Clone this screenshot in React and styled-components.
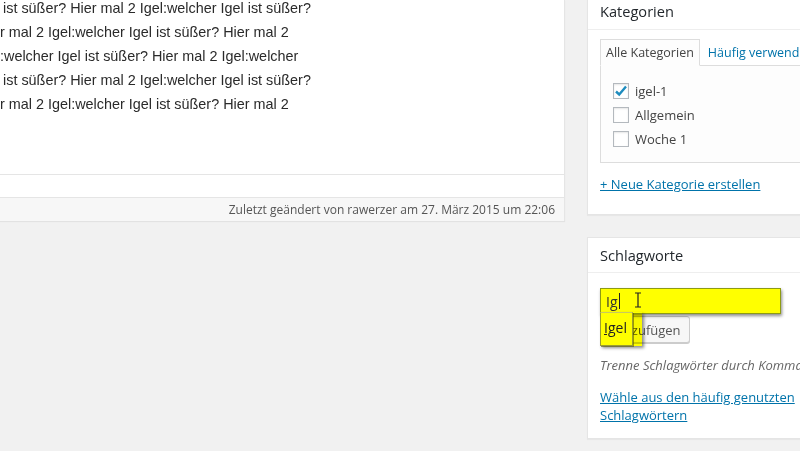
import React from 'react';
import styled, { createGlobalStyle } from 'styled-components';

const Global = createGlobalStyle`
  html, body {
    margin: 0;
    padding: 0;
    background: #f1f1f1;
    overflow: hidden;
  }
  body {
    font-family: "Open Sans", "Noto Sans", sans-serif;
    font-size: 13px;
    color: #444;
  }
`;

const Page = styled.div`
  display: flex;
  align-items: flex-start;
  width: 800px;
  height: 451px;
  overflow: hidden;
`;

const EditorPanel = styled.div`
  width: 565px;
  flex-shrink: 0;
  background: #fff;
  box-shadow: 0 1px 1px rgba(0, 0, 0, 0.06);
  border-right: 1px solid #e5e5e5;
  box-sizing: border-box;
`;

const EditorBody = styled.div`
  height: 174px;
  overflow: hidden;
  border-bottom: 1px solid #e5e5e5;
`;

const EditorText = styled.div`
  margin-top: -4px;
  font-family: "Liberation Sans", Arial, sans-serif;
  font-size: 14.4px;
  line-height: 24px;
  color: #2a2a2a;
  white-space: nowrap;
`;

const Line = styled.div`
  padding-left: ${p => p.$indent || 0}px;
`;

const Spacer = styled.div`
  height: 22px;
`;

const StatusBar = styled.div`
  height: 23px;
  background: #f7f7f7;
  border-top: 1px solid #e5e5e5;
  display: flex;
  align-items: center;
  justify-content: flex-end;
  padding-right: 9px;
  font-size: 12px;
  color: #555;
`;

const Sidebar = styled.div`
  margin-left: 22px;
  width: 280px;
  flex-shrink: 0;
  display: flex;
  flex-direction: column;
  gap: 22px;
`;

const Box = styled.div`
  background: #fff;
  border: 1px solid #e5e5e5;
  box-shadow: 0 1px 1px rgba(0, 0, 0, 0.04);
  margin-top: ${p => p.$top || 0}px;
`;

const BoxHeader = styled.div`
  height: ${p => p.$h}px;
  box-sizing: border-box;
  border-bottom: 1px solid #eee;
  display: flex;
  align-items: flex-end;
  padding: 0 12px ${p => p.$pb}px;
  font-size: 14.6px;
  color: #23282d;
`;

const BoxInside = styled.div`
  padding: ${p => p.$pad};
`;

const Tabs = styled.div`
  display: flex;
  align-items: flex-end;
  position: relative;
  z-index: 1;
  margin-bottom: -1px;
`;

const Tab = styled.div`
  height: 27px;
  box-sizing: border-box;
  padding: 0 5px;
  display: flex;
  align-items: center;
  font-size: 12.5px;
  border: 1px solid ${p => (p.$active ? '#ddd' : 'transparent')};
  border-bottom-color: ${p => (p.$active ? '#fdfdfd' : 'transparent')};
  background: ${p => (p.$active ? '#fdfdfd' : 'transparent')};
  color: ${p => (p.$active ? '#444' : '#0073aa')};
  white-space: nowrap;
  margin-left: ${p => (p.$active ? 0 : 2)}px;
`;

const TabPanel = styled.div`
  border: 1px solid #ddd;
  background: #fdfdfd;
  padding: 13px 12px 11px;
  width: 300px;
`;

const CheckRow = styled.label`
  display: flex;
  align-items: center;
  height: 24px;
  gap: 6px;
  color: #444;
`;

const CheckBox = styled.span`
  width: 16px;
  height: 16px;
  box-sizing: border-box;
  border: 1px solid #b4b9be;
  background: #fff;
  box-shadow: inset 0 1px 2px rgba(0, 0, 0, 0.1);
  display: flex;
  align-items: center;
  justify-content: center;
`;

const Link = styled.a`
  color: #0073aa;
  text-decoration: underline;
  display: block;
  line-height: 18px;
  margin-top: ${p => p.$mt || 0}px;
`;

const TagForm = styled.div`
  position: relative;
  height: 57px;
`;

const TagInput = styled.div`
  width: 181px;
  height: 26px;
  box-sizing: border-box;
  background: #ffff00;
  border: 1px solid #8d9a14;
  box-shadow: 1px 2px 3px rgba(0, 0, 0, 0.45);
  display: flex;
  align-items: center;
  padding-left: 5px;
  font-size: 14px;
  color: #333;
  position: relative;
  z-index: 2;
`;

const Caret = styled.span`
  display: inline-block;
  width: 1px;
  height: 16px;
  background: #222;
  margin-left: 1px;
`;

const IBeam = styled.svg`
  position: absolute;
  left: 34px;
  top: 4px;
  z-index: 5;
`;

const AddButton = styled.div`
  position: absolute;
  left: 0;
  top: 28px;
  width: 90px;
  height: 27px;
  box-sizing: border-box;
  border: 1px solid #ccc;
  border-radius: 3px;
  background: #f7f7f7;
  box-shadow: 0 1px 0 #ccc;
  display: flex;
  align-items: center;
  padding-left: 10px;
  color: #555;
`;

const Marker = styled.div`
  position: absolute;
  left: 0;
  top: 24px;
  width: 42px;
  height: 34px;
  background: #ffff00;
  mix-blend-mode: multiply;
  box-shadow: 2px 2px 3px rgba(0, 0, 0, 0.45);
  z-index: 3;
`;

const Suggest = styled.div`
  position: absolute;
  left: 0;
  top: 24px;
  width: 33px;
  height: 34px;
  box-sizing: border-box;
  background: #ffff00;
  border: 1px solid #9a9c30;
  border-top-color: #c8c860;
  box-shadow: 1px 1px 0 rgba(90, 90, 0, 0.6);
  display: flex;
  align-items: center;
  padding-left: 3px;
  padding-bottom: 3px;
  font-size: 14px;
  color: #222;
  z-index: 4;
`;

const Match = styled.span`
  text-decoration: underline;
`;

const Hint = styled.p`
  margin: 11px 0 14px;
  line-height: 18px;
  font-style: italic;
  color: #666;
  white-space: nowrap;
`;

export default function App() {
  return (
    <Page>
      <Global />
      <EditorPanel>
        <EditorBody>
          <EditorText>
            <Line $indent={3}>ist süßer? Hier mal 2 Igel:welcher Igel ist süßer?</Line>
            <Line $indent={0}>r mal 2 Igel:welcher Igel ist süßer? Hier mal 2</Line>
            <Line $indent={0}>:welcher Igel ist süßer? Hier mal 2 Igel:welcher</Line>
            <Line $indent={3}>ist süßer? Hier mal 2 Igel:welcher Igel ist süßer?</Line>
            <Line $indent={0}>r mal 2 Igel:welcher Igel ist süßer? Hier mal 2</Line>
          </EditorText>
        </EditorBody>
        <Spacer />
        <StatusBar>Zuletzt geändert von rawerzer am 27. März 2015 um 22:06</StatusBar>
      </EditorPanel>

      <Sidebar>
        <Box $top={-10}>
          <BoxHeader $h={39} $pb={8}>Kategorien</BoxHeader>
          <BoxInside $pad="9px 12px 21px">
            <Tabs>
              <Tab $active>Alle Kategorien</Tab>
              <Tab>Häufig verwendet</Tab>
            </Tabs>
            <TabPanel>
              <CheckRow>
                <CheckBox>
                  <svg width="14" height="14" viewBox="0 0 14 14">
                    <path d="M2 7.5 L5.2 10.5 L12 2.5" fill="none" stroke="#1e8cbe" strokeWidth="2.4" />
                  </svg>
                </CheckBox>
                igel-1
              </CheckRow>
              <CheckRow>
                <CheckBox />
                Allgemein
              </CheckRow>
              <CheckRow>
                <CheckBox />
                Woche 1
              </CheckRow>
            </TabPanel>
            <Link $mt={12}>+ Neue Kategorie erstellen</Link>
          </BoxInside>
        </Box>

        <Box>
          <BoxHeader $h={35} $pb={7}>Schlagworte</BoxHeader>
          <BoxInside $pad="15px 12px 14px">
            <TagForm>
              <TagInput>
                Ig<Caret />
              </TagInput>
              <IBeam width="8" height="16" viewBox="0 0 8 16">
                <path d="M1 1 H7 M4 1 V15 M1 15 H7" stroke="#222" strokeWidth="1.2" fill="none" />
              </IBeam>
              <AddButton>Hinzufügen</AddButton>
              <Marker />
              <Suggest>
                <Match>Ig</Match>el
              </Suggest>
            </TagForm>
            <Hint>Trenne Schlagwörter durch Kommas</Hint>
            <Link>Wähle aus den häufig genutzten<br />Schlagwörtern</Link>
          </BoxInside>
        </Box>
      </Sidebar>
    </Page>
  );
}
